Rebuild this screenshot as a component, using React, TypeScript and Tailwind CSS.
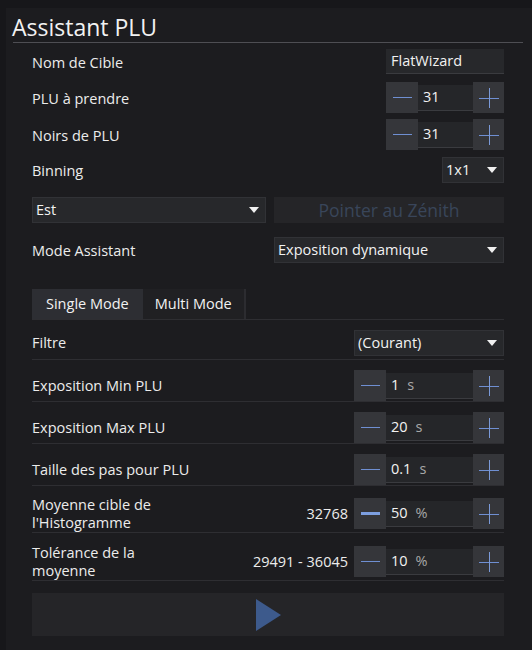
import React from "react";

const font = "font-['Open_Sans',sans-serif]";

function Minus({ strong }: { strong?: boolean }) {
  return (
    <div className="w-[32px] h-[31px] bg-[#35363a] flex items-center justify-center shrink-0">
      <span className={strong ? "w-[19px] h-[3px] bg-[#7d9fe0]" : "w-[19px] h-px bg-[#6f8fd2]"} />
    </div>
  );
}

function Plus() {
  return (
    <div className="w-[31px] h-[31px] bg-[#35363a] flex items-center justify-center shrink-0">
      <svg width="20" height="20" viewBox="0 0 20 20">
        <line x1="0" y1="10.5" x2="20" y2="10.5" stroke="#6f8fd2" strokeWidth="1" />
        <line x1="10.5" y1="0" x2="10.5" y2="20" stroke="#7b9ad8" strokeWidth="1" />
      </svg>
    </div>
  );
}

function NumberBox({ value, unit, wide, strong }: { value: string; unit?: string; wide?: boolean; strong?: boolean }) {
  return (
    <div className={`flex items-center ${wide ? "w-[150px]" : "w-[118px]"}`}>
      <Minus strong={strong} />
      <div className="flex-1 h-[26px] bg-[#252629] border-b border-[#3a3b3f] flex items-center px-[5px] gap-[8px]">
        <span className="text-[#f2f2f2]">{value}</span>
        {unit && <span className="text-[#a8a8a8]">{unit}</span>}
      </div>
      <Plus />
    </div>
  );
}

function Arrow() {
  return (
    <svg width="10" height="6" viewBox="0 0 10 6" className="shrink-0">
      <polygon points="0,0 10,0 5,6" fill="#f0f0f0" />
    </svg>
  );
}

function Select({ value, className }: { value: string; className: string }) {
  return (
    <div className={`h-[26px] bg-[#27282b] border border-[#313236] flex items-center justify-between pl-[3px] pr-[6px] ${className}`}>
      <span className="text-[#f2f2f2]">{value}</span>
      <Arrow />
    </div>
  );
}

function Row({ label, children, className }: { label: React.ReactNode; children: React.ReactNode; className: string }) {
  return (
    <div className={`flex items-center justify-between ${className}`}>
      <span className="text-[#ececec] pt-[2px]">{label}</span>
      {children}
    </div>
  );
}

function ListRow({ label, value, children, className }: { label: React.ReactNode; value?: string; children: React.ReactNode; className: string }) {
  return (
    <div className={`flex items-center border-b border-[#2e2e32] ${className}`}>
      <span className="flex-1 text-[#ececec] leading-[18px]">{label}</span>
      {value && <span className="text-[#ececec] mr-[6px]">{value}</span>}
      {children}
    </div>
  );
}

export default function App() {
  return (
    <div className={`w-[532px] h-[650px] bg-[#17171a] pl-[6px] pt-[8px] overflow-hidden ${font} text-[14.5px]`}>
      <div className="h-full bg-[#1c1c1f] pl-[7px] pr-[9px]">
        {/* title */}
        <div className="h-[35px] border-b border-[#4e4e53] flex items-end">
          <h1 className="text-[23px] leading-[30px] text-[#f2f2f2] -ml-[1px]">Assistant PLU</h1>
        </div>

        <div className="px-[19px] flex flex-col">
          <Row label="Nom de Cible" className="mt-[6px] h-[25px]">
            <div className="w-[118px] h-[25px] bg-[#27282b] border-b border-[#3a3b3f] flex items-center px-[5px] text-[#f2f2f2]">
              FlatWizard
            </div>
          </Row>
          <Row label="PLU à prendre" className="mt-[8px] h-[31px]">
            <NumberBox value="31" />
          </Row>
          <Row label="Noirs de PLU" className="mt-[6px] h-[31px]">
            <NumberBox value="31" />
          </Row>
          <Row label="Binning" className="mt-[7px] h-[26px]">
            <Select value="1x1" className="w-[62px]" />
          </Row>

          <div className="mt-[14px] h-[26px] flex gap-[8px]">
            <Select value="Est" className="flex-1" />
            <div className="w-[230px] h-[26px] bg-[#252528] flex items-center justify-center text-[17.5px] text-[#39455a]">
              Pointer au Zénith
            </div>
          </div>

          <Row label="Mode Assistant" className="mt-[14px] h-[26px]">
            <Select value="Exposition dynamique" className="w-[230px]" />
          </Row>

          {/* tabs */}
          <div className="mt-[26px] h-[31px] flex border-b border-[#2e2e32]">
            <div className="h-[30px] px-[14px] bg-[#2d2e33] flex items-center text-[#f2f2f2]">Single Mode</div>
            <div className="h-[30px] px-[12px] bg-[#202023] border-r-2 border-[#2c2c30] flex items-center text-[#f2f2f2]">
              Multi Mode
            </div>
          </div>

          <ListRow label="Filtre" className="h-[40px] pt-[10px] pb-[3px]">
            <Select value="(Courant)" className="w-[150px]" />
          </ListRow>
          <ListRow label="Exposition Min PLU" className="h-[42px] pt-[10px]">
            <NumberBox value="1" unit="s" wide />
          </ListRow>
          <ListRow label="Exposition Max PLU" className="h-[42px] pt-[10px]">
            <NumberBox value="20" unit="s" wide />
          </ListRow>
          <ListRow label="Taille des pas pour PLU" className="h-[42px] pt-[10px]">
            <NumberBox value="0.1" unit="s" wide />
          </ListRow>
          <ListRow
            label={<>Moyenne cible de<br />l'Histogramme</>}
            value="32768"
            className="h-[47px] pt-[9px]"
          >
            <NumberBox value="50" unit="%" wide strong />
          </ListRow>
          <ListRow
            label={<>Tolérance de la<br />moyenne</>}
            value="29491 - 36045"
            className="h-[48px] pt-[10px]"
          >
            <NumberBox value="10" unit="%" wide />
          </ListRow>

          <div className="mt-[12px] h-[43px] bg-[#252528] flex items-center justify-center">
            <svg width="25" height="32" viewBox="0 0 25 32">
              <polygon points="0,0 25,16 0,32" fill="#3d5a8c" />
            </svg>
          </div>
        </div>
      </div>
    </div>
  );
}
